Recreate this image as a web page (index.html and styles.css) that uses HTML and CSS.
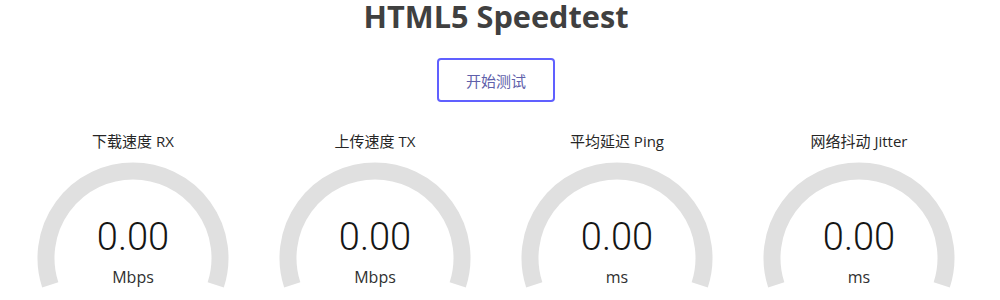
FILE: index.html
```html
<!DOCTYPE html>
<html lang="zh-CN">
<head>
<meta charset="utf-8">
<title>HTML5 Speedtest</title>
<link rel="stylesheet" href="styles.css">
</head>
<body>
<div class="page">
  <h1 class="title">HTML5 Speedtest</h1>
  <div class="actions"><button class="start-btn">开始测试</button></div>
  <div class="meters">
    <div class="meter">
      <div class="label">下载速度 RX</div>
      <div class="gauge">
        <svg class="arc" width="242" height="160" viewBox="0 0 242 160"><path d="M 38.26 133.9 A 87 87 0 1 1 203.74 133.9" fill="none" stroke="#e0e0e0" stroke-width="17"/></svg>
        <div class="readout"><div class="num">0.00</div><div class="unit">Mbps</div></div>
      </div>
    </div>
    <div class="meter">
      <div class="label">上传速度 TX</div>
      <div class="gauge">
        <svg class="arc" width="242" height="160" viewBox="0 0 242 160"><path d="M 38.26 133.9 A 87 87 0 1 1 203.74 133.9" fill="none" stroke="#e0e0e0" stroke-width="17"/></svg>
        <div class="readout"><div class="num">0.00</div><div class="unit">Mbps</div></div>
      </div>
    </div>
    <div class="meter">
      <div class="label">平均延迟 Ping</div>
      <div class="gauge">
        <svg class="arc" width="242" height="160" viewBox="0 0 242 160"><path d="M 38.26 133.9 A 87 87 0 1 1 203.74 133.9" fill="none" stroke="#e0e0e0" stroke-width="17"/></svg>
        <div class="readout"><div class="num">0.00</div><div class="unit">ms</div></div>
      </div>
    </div>
    <div class="meter">
      <div class="label">网络抖动 Jitter</div>
      <div class="gauge">
        <svg class="arc" width="242" height="160" viewBox="0 0 242 160"><path d="M 38.26 133.9 A 87 87 0 1 1 203.74 133.9" fill="none" stroke="#e0e0e0" stroke-width="17"/></svg>
        <div class="readout"><div class="num">0.00</div><div class="unit">ms</div></div>
      </div>
    </div>
  </div>
</div>
</body>
</html>
```
FILE: styles.css
```css
html, body {
  margin: 0;
  padding: 0;
  background: #ffffff;
  overflow: hidden;
}
body {
  font-family: "Open Sans", "Noto Sans CJK SC", sans-serif;
  color: #202020;
}
.page {
  padding: 0 20px 0 12px;
  text-align: center;
}
.title {
  margin: 0;
  font-family: "Open Sans", sans-serif;
  font-weight: 700;
  font-size: 30.7px;
  line-height: 32px;
  color: #404040;
}
.actions {
  padding-top: 26px;
  display: flex;
  justify-content: center;
}
.start-btn {
  box-sizing: border-box;
  width: 118px;
  height: 44px;
  border: 2px solid #6060ff;
  border-radius: 4px;
  background: #ffffff;
  color: #6060aa;
  font-family: "Noto Sans CJK SC", sans-serif;
  font-size: 15px;
  padding: 0;
  cursor: pointer;
}
.meters {
  display: grid;
  grid-template-columns: repeat(4, 242px);
  margin-top: 29px;
}
.label {
  font-family: "Open Sans", "Noto Sans CJK SC", sans-serif;
  font-size: 15px;
  line-height: 20px;
  color: #262626;
}
.gauge {
  display: grid;
  justify-items: center;
}
.gauge > * {
  grid-area: 1 / 1;
}
.arc {
  display: block;
}
.readout {
  padding-top: 67px;
  width: 100%;
}
.num {
  font-family: Roboto, sans-serif;
  font-weight: 300;
  font-size: 38px;
  line-height: 38px;
  color: #151515;
}
.unit {
  margin-top: 11px;
  font-family: "Open Sans", sans-serif;
  font-size: 16px;
  line-height: 20px;
  color: #303030;
}
```
